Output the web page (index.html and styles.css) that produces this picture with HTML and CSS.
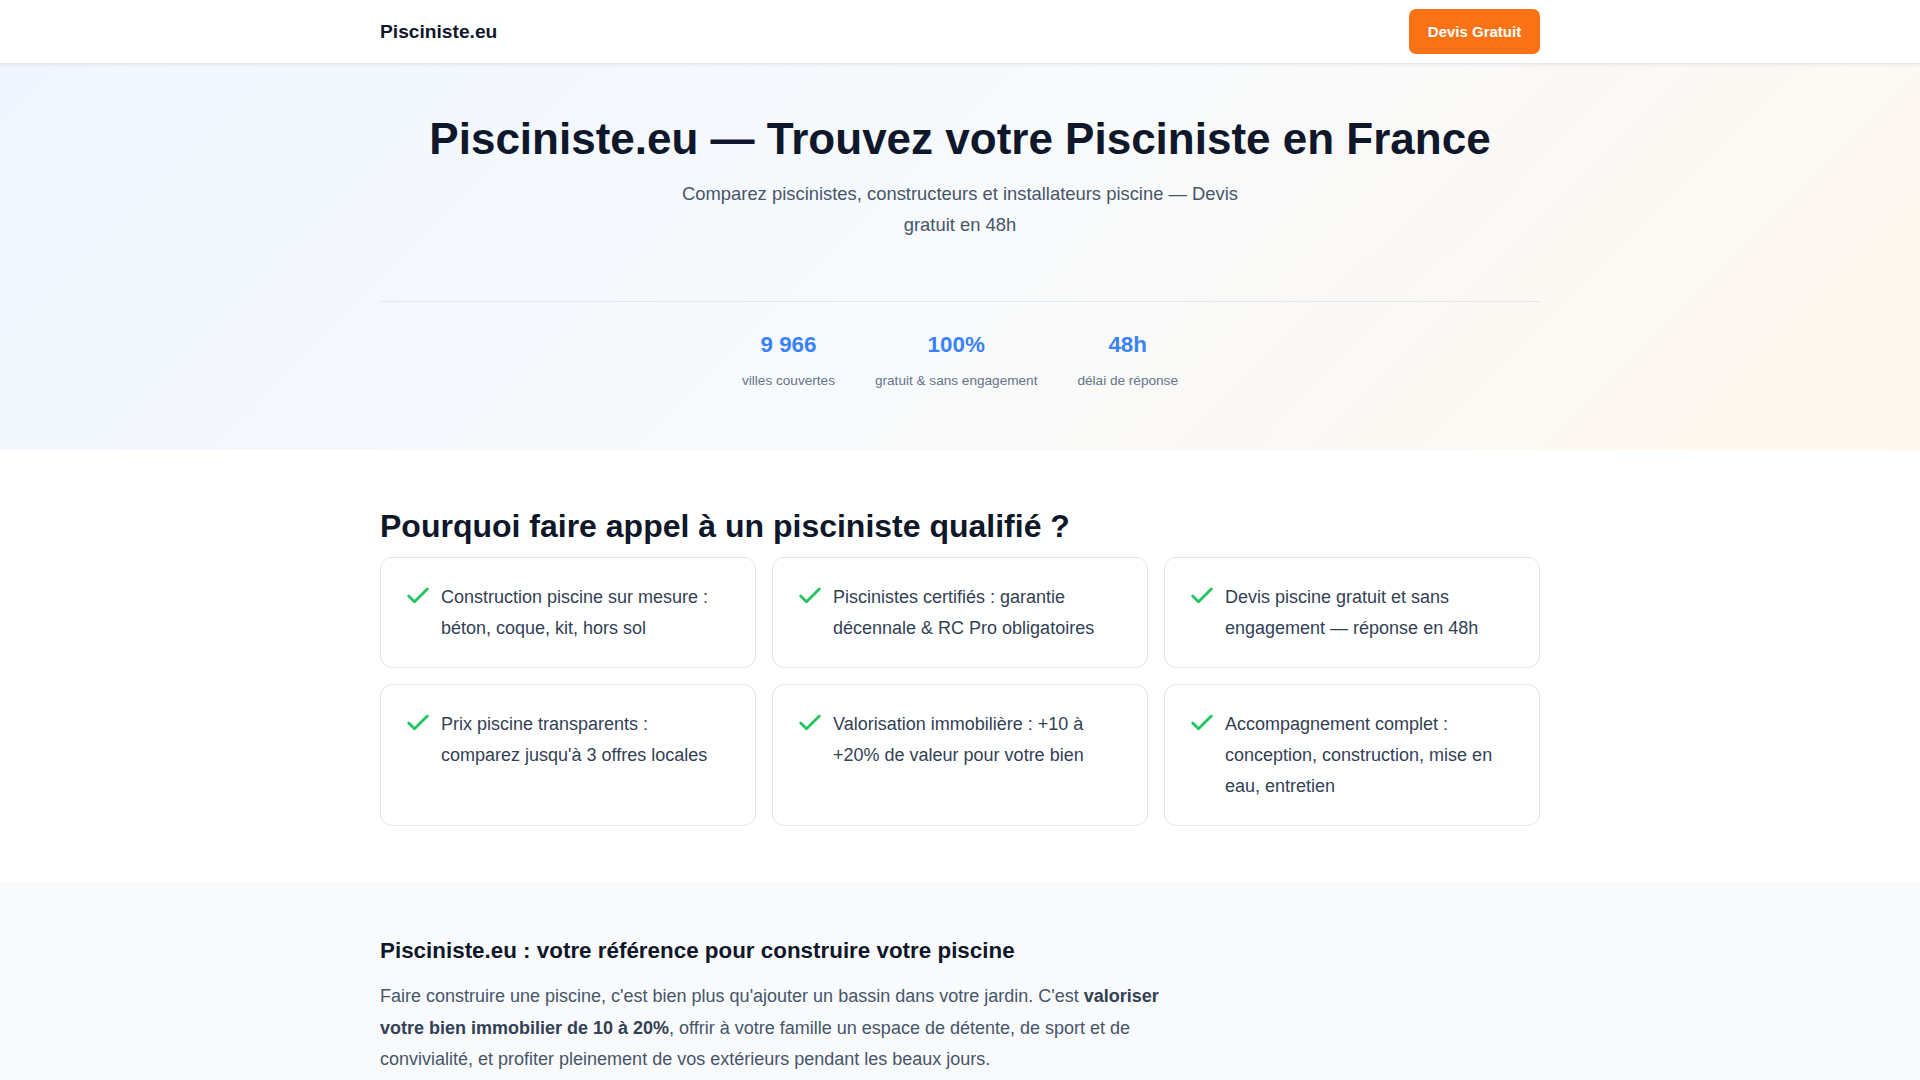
FILE: index.html
```html
<!DOCTYPE html>
<html lang="fr">
<head>
<meta charset="utf-8">
<title>Pisciniste.eu</title>
<link rel="stylesheet" href="styles.css">
</head>
<body>
<header class="site-header">
  <div class="container header-inner">
    <a class="logo" href="#">Pisciniste.eu</a>
    <a class="btn-cta" href="#">Devis Gratuit</a>
  </div>
</header>

<section class="hero">
  <div class="container">
    <h1 class="hero-title">Pisciniste.eu — Trouvez votre Pisciniste en France</h1>
    <p class="hero-sub">Comparez piscinistes, constructeurs et installateurs piscine — Devis gratuit en 48h</p>
    <div class="stats">
      <div class="stat"><div class="stat-num">9 966</div><div class="stat-label">villes couvertes</div></div>
      <div class="stat"><div class="stat-num">100%</div><div class="stat-label">gratuit &amp; sans engagement</div></div>
      <div class="stat"><div class="stat-num">48h</div><div class="stat-label">délai de réponse</div></div>
    </div>
  </div>
</section>

<section class="why">
  <div class="container">
    <h2 class="why-title">Pourquoi faire appel à un pisciniste qualifié ?</h2>
    <div class="cards">
      <div class="card"><svg class="check" viewBox="0 0 24 24"><path d="M20 6 9 17l-5-5"/></svg><p>Construction piscine sur mesure : béton, coque, kit, hors sol</p></div>
      <div class="card"><svg class="check" viewBox="0 0 24 24"><path d="M20 6 9 17l-5-5"/></svg><p>Piscinistes certifiés : garantie décennale &amp; RC Pro obligatoires</p></div>
      <div class="card"><svg class="check" viewBox="0 0 24 24"><path d="M20 6 9 17l-5-5"/></svg><p>Devis piscine gratuit et sans engagement — réponse en 48h</p></div>
      <div class="card"><svg class="check" viewBox="0 0 24 24"><path d="M20 6 9 17l-5-5"/></svg><p>Prix piscine transparents : comparez jusqu'à 3 offres locales</p></div>
      <div class="card"><svg class="check" viewBox="0 0 24 24"><path d="M20 6 9 17l-5-5"/></svg><p>Valorisation immobilière : +10 à +20% de valeur pour votre bien</p></div>
      <div class="card"><svg class="check" viewBox="0 0 24 24"><path d="M20 6 9 17l-5-5"/></svg><p>Accompagnement complet : conception, construction, mise en eau, entretien</p></div>
    </div>
  </div>
</section>

<section class="about">
  <div class="container">
    <h3 class="about-title">Pisciniste.eu : votre référence pour construire votre piscine</h3>
    <p class="about-text">Faire construire une piscine, c'est bien plus qu'ajouter un bassin dans votre jardin. C'est <strong>valoriser votre bien immobilier de 10 à 20%</strong>, offrir à votre famille un espace de détente, de sport et de convivialité, et profiter pleinement de vos extérieurs pendant les beaux jours.</p>
  </div>
</section>
</body>
</html>
```
FILE: styles.css
```css
* { box-sizing: border-box; }
html, body { margin: 0; padding: 0; }
body {
  font-family: "Liberation Sans", Arial, sans-serif;
  color: #0f172a;
  background: #ffffff;
}
.container {
  width: 1160px;
  margin: 0 auto;
}
.site-header {
  background: #ffffff;
  border-bottom: 1px solid #e2e8f0;
  box-shadow: 0 1px 3px rgba(15, 23, 42, 0.06);
  position: relative;
  z-index: 1;
}
.header-inner {
  height: 63px;
  display: flex;
  align-items: center;
  justify-content: space-between;
}
.logo {
  font-size: 19.2px;
  font-weight: 700;
  color: #0f172a;
  text-decoration: none;
}
.btn-cta {
  display: inline-flex;
  align-items: center;
  justify-content: center;
  width: 131px;
  height: 45px;
  background: #f97316;
  color: #ffffff;
  font-size: 15px;
  font-weight: 700;
  text-decoration: none;
  border-radius: 7px;
}
.hero {
  background: linear-gradient(135deg, #eff6ff 0%, #f8fafc 50%, #fff7ed 100%);
  padding: 49px 0 60px;
  text-align: center;
}
.hero-title {
  margin: 0;
  font-size: 44px;
  line-height: 52px;
  font-weight: 700;
  color: #0f172a;
}
.hero-sub {
  margin: 14px auto 0;
  max-width: 580px;
  font-size: 18.4px;
  line-height: 30.6px;
  color: #475569;
}
.stats {
  margin-top: 61px;
  border-top: 1px solid #e2e8f0;
  padding-top: 28px;
  display: flex;
  justify-content: center;
  gap: 40px;
}
.stat-num {
  font-size: 22.4px;
  line-height: 30px;
  font-weight: 700;
  color: #3b82f6;
}
.stat-label {
  margin-top: 12px;
  font-size: 13.6px;
  line-height: 18px;
  color: #64748b;
}
.why {
  background: #ffffff;
  padding: 56px 0 57px;
}
.why-title {
  margin: 0 0 11px;
  font-size: 32px;
  line-height: 40px;
  font-weight: 700;
  color: #0f172a;
}
.cards {
  display: grid;
  grid-template-columns: repeat(3, 1fr);
  gap: 16px;
}
.card {
  display: flex;
  align-items: flex-start;
  gap: 9px;
  padding: 24px 24px 24px 23px;
  border: 1px solid #e2e8f0;
  border-radius: 12px;
  background: #ffffff;
}
.check {
  flex: 0 0 28px;
  width: 28px;
  height: 28px;
  fill: none;
  stroke: #22c55e;
  stroke-width: 2.4;
  stroke-linecap: round;
  stroke-linejoin: round;
}
.card p {
  margin: 0;
  font-size: 18px;
  line-height: 30.6px;
  color: #334155;
}
.about {
  background: #f8fafc;
  padding: 54px 0 60px;
}
.about-title {
  margin: 0 0 16px;
  font-size: 22.4px;
  line-height: 28px;
  font-weight: 700;
  color: #0f172a;
}
.about-text {
  margin: 0;
  max-width: 800px;
  font-size: 18px;
  line-height: 31.4px;
  color: #475569;
}
.about-text strong {
  color: #334155;
  font-weight: 700;
}
```
